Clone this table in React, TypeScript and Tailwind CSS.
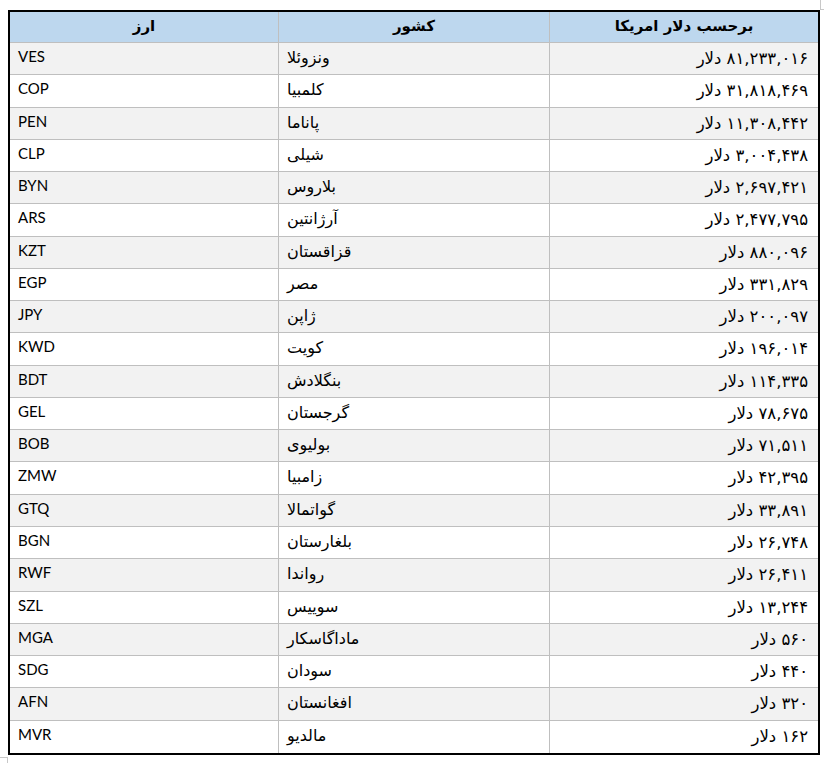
import React from "react";

const rows: [string, string, string][] = [
  ["VES", "ونزوئلا", "۸۱,۲۳۳,۰۱۶"],
  ["COP", "کلمبیا", "۳۱,۸۱۸,۴۶۹"],
  ["PEN", "پاناما", "۱۱,۳۰۸,۴۴۲"],
  ["CLP", "شیلی", "۳,۰۰۴,۴۳۸"],
  ["BYN", "بلاروس", "۲,۶۹۷,۴۲۱"],
  ["ARS", "آرژانتین", "۲,۴۷۷,۷۹۵"],
  ["KZT", "قزاقستان", "۸۸۰,۰۹۶"],
  ["EGP", "مصر", "۳۳۱,۸۲۹"],
  ["JPY", "ژاپن", "۲۰۰,۰۹۷"],
  ["KWD", "کویت", "۱۹۶,۰۱۴"],
  ["BDT", "بنگلادش", "۱۱۴,۳۳۵"],
  ["GEL", "گرجستان", "۷۸,۶۷۵"],
  ["BOB", "بولیوی", "۷۱,۵۱۱"],
  ["ZMW", "زامبیا", "۴۲,۳۹۵"],
  ["GTQ", "گواتمالا", "۳۳,۸۹۱"],
  ["BGN", "بلغارستان", "۲۶,۷۴۸"],
  ["RWF", "رواندا", "۲۶,۴۱۱"],
  ["SZL", "سوییس", "۱۳,۲۴۴"],
  ["MGA", "ماداگاسکار", "۵۶۰"],
  ["SDG", "سودان", "۴۴۰"],
  ["AFN", "افغانستان", "۳۲۰"],
  ["MVR", "مالدیو", "۱۶۲"],
];

export default function App() {
  return (
    <div className="relative w-[824px] h-[763px] bg-white overflow-hidden text-black">
      <div className="absolute left-[820px] top-0 w-[4px] h-[10px] border-l border-b border-[#c8c8c8]" />
      <div className="absolute left-0 top-[757px] w-[8px] h-[6px] border-t border-r border-[#c8c8c8]" />
      <div className="pt-[10px] pl-[8px]">
        <div className="w-[812px] border-2 border-black flex flex-col">
          <div className="flex h-[31px] bg-[#bdd7ee] border-b border-[#bfbfbf] font-bold text-[15px] leading-[22px] font-['DejaVu_Sans',sans-serif]">
            <div dir="rtl" className="w-[269px] border-r border-[#bfbfbf] text-center pt-[3px]">ارز</div>
            <div dir="rtl" className="w-[271px] border-r border-[#bfbfbf] text-center pt-[3px]">کشور</div>
            <div dir="rtl" className="w-[268px] text-center pt-[3px]">برحسب دلار امریکا</div>
          </div>
          {rows.map(([code, country, amount], i) => (
            <div
              key={code}
              className={`flex h-[32.27px] ${i < rows.length - 1 ? "border-b border-[#bfbfbf]" : ""} ${i % 2 === 0 ? "bg-[#f2f2f2]" : "bg-white"}`}
            >
              <div className="w-[269px] border-r border-[#bfbfbf] pl-[8px] pt-[2px] text-[15px] leading-[22px] font-['Lato',sans-serif]">
                {code}
              </div>
              <div
                dir="rtl"
                className="w-[271px] border-r border-[#bfbfbf] pl-[8px] pt-[4px] text-left text-[16px] leading-[22px] font-['DejaVu_Sans',sans-serif]"
              >
                {country}
              </div>
              <div
                dir="rtl"
                className="w-[268px] pr-[10px] pt-[5px] text-right text-[16.5px] leading-[22px] font-['DejaVu_Sans',sans-serif]"
              >
                {amount} دلار
              </div>
            </div>
          ))}
        </div>
      </div>
    </div>
  );
}
